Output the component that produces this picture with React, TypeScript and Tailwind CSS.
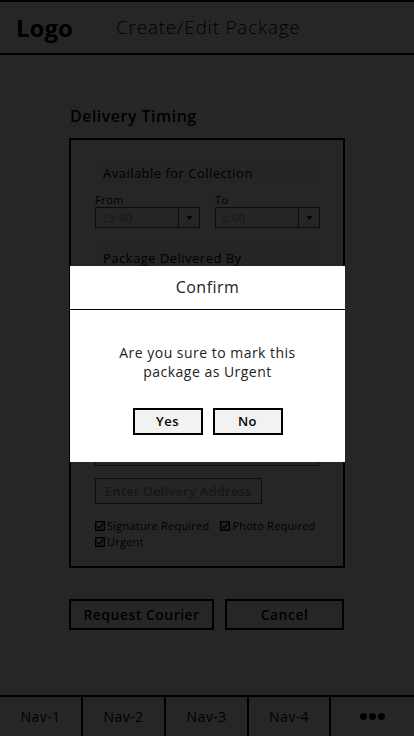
import React from 'react';

const font = { fontFamily: '"Open Sans", "Liberation Sans", sans-serif' };

function Select({ value }: { value: string }) {
  return (
    <div className="flex h-[21px] border border-[#555] bg-[#f4f4f4]">
      <div className="flex-1 pl-[6px] text-[11px] leading-[19px] text-[#999]">{value}</div>
      <div className="flex w-[21px] items-center justify-center border-l border-[#555]">
        <svg width="7" height="4" viewBox="0 0 7 4">
          <path d="M0 0h7L3.5 4z" fill="#333" />
        </svg>
      </div>
    </div>
  );
}

function Check({ label }: { label: string }) {
  return (
    <label className="flex items-center gap-[2px] whitespace-nowrap text-[11px] leading-[14px] tracking-[0.02em] text-black">
      <svg width="10" height="10" viewBox="0 0 10 10" className="shrink-0">
        <rect x="0.75" y="0.75" width="8.5" height="8.5" fill="none" stroke="#000" strokeWidth="1.5" />
        <path d="M2.2 5.2l2 2 3.6-4.4" fill="none" stroke="#000" strokeWidth="1.5" />
      </svg>
      {label}
    </label>
  );
}

export default function App() {
  return (
    <div
      className="relative flex h-[736px] w-[414px] flex-col overflow-hidden bg-white tracking-[0.03em]"
      style={font}
    >
      {/* header */}
      <header className="flex h-[55px] shrink-0 items-center border-t-2 border-b-2 border-black px-4">
        <span className="w-[100px] text-[24px] font-bold tracking-normal text-black">Logo</span>
        <span className="text-[19px] font-light tracking-[0.04em] text-black">Create/Edit Package</span>
      </header>

      <main className="flex flex-1 flex-col px-[69px] pt-[49px]">
        <h2 className="mb-[10px] pl-px text-[16px] font-semibold text-black">Delivery Timing</h2>
        <section className="flex h-[430px] flex-col border-2 border-black px-[24px] pt-[20px]">
          <div className="h-[26px] bg-[#f4f4f4] pl-2 text-[13px] leading-[26px] text-black">
            Available for Collection
          </div>
          <div className="mt-[7px] grid grid-cols-[105px_105px] gap-x-[15px]">
            <span className="text-[11px] leading-[14px] text-black">From</span>
            <span className="text-[11px] leading-[14px] text-black">To</span>
            <Select value="23:00" />
            <Select value="5:00" />
          </div>
          <div className="mt-[17px] h-[26px] bg-[#f4f4f4] pl-2 text-[13px] leading-[26px] text-black">
            Package Delivered By
          </div>
          <div className="mt-[8px] h-[187px] border border-[#555] bg-[#f4f4f4]" />
          <div className="mt-[12px] self-start border border-[#555] bg-[#f4f4f4] px-[9px] text-[13px] font-semibold leading-[24px] tracking-[0.015em] text-[#999]">
            Enter Delivery Address
          </div>
          <div className="mt-[15px] flex flex-col gap-[2px]">
            <div className="flex gap-[11px]">
              <Check label="Signature Required" />
              <Check label="Photo Required" />
            </div>
            <Check label="Urgent" />
          </div>
        </section>
        <div className="mt-[31px] flex gap-[11px]">
          <button className="h-[31px] w-[145px] border-2 border-black text-[14px] font-semibold text-black">
            Request Courier
          </button>
          <button className="h-[31px] w-[119px] border-2 border-black text-[14px] font-semibold text-black">
            Cancel
          </button>
        </div>
      </main>

      {/* bottom nav */}
      <nav className="grid h-[41px] shrink-0 grid-cols-[83px_83px_83px_82px_1fr] border-t-2 border-black">
        {['Nav-1', 'Nav-2', 'Nav-3', 'Nav-4'].map((n) => (
          <div key={n} className="flex items-center justify-center border-r-2 border-black text-[14px] font-medium text-black">
            {n}
          </div>
        ))}
        <div className="flex items-center justify-center gap-[2px]">
          <span className="h-[7px] w-[7px] rounded-full bg-black" />
          <span className="h-[7px] w-[7px] rounded-full bg-black" />
          <span className="h-[7px] w-[7px] rounded-full bg-black" />
        </div>
      </nav>

      {/* overlay */}
      <div className="absolute inset-0 bg-black/85">
        <div className="absolute left-[70px] top-[266px] w-[275px] bg-white">
          <div className="h-[44px] border-b border-black text-center text-[16px] font-medium leading-[43px] text-[#222]">
            Confirm
          </div>
          <p className="mt-[33px] text-center text-[14px] leading-[19px] text-[#222]">
            Are you sure to mark this
            <br />
            package as Urgent
          </p>
          <div className="mt-[27px] flex justify-center gap-[10px] pb-[27px]">
            <button className="h-[27px] w-[70px] border-2 border-black bg-[#f2f2f2] text-[13px] font-semibold text-black">
              Yes
            </button>
            <button className="h-[27px] w-[70px] border-2 border-black bg-[#f2f2f2] text-[13px] font-semibold text-black">
              No
            </button>
          </div>
        </div>
      </div>
    </div>
  );
}
